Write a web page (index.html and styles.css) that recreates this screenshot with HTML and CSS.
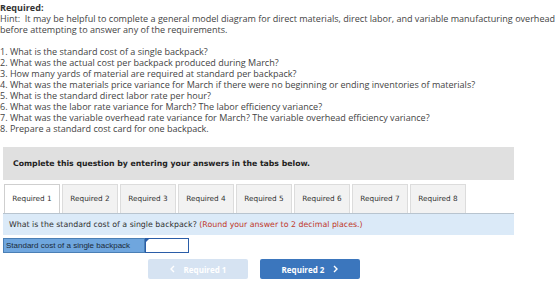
FILE: index.html
```html
<!DOCTYPE html>
<html lang="en">
<head>
    <meta charset="UTF-8">
    <title>Required</title>
    <link rel="stylesheet" href="styles.css">
</head>
<body>
    <div class="intro">
        <p class="title">Required:</p>
        <p>Hint:&nbsp; It may be helpful to complete a general model diagram for direct materials, direct labor, and variable manufacturing overhead before attempting to answer any of the requirements.</p>
        <ol class="reqs">
            <li>1. What is the standard cost of a single backpack?</li>
            <li>2. What was the actual cost per backpack produced during March?</li>
            <li>3. How many yards of material are required at standard per backpack?</li>
            <li>4. What was the materials price variance for March if there were no beginning or ending inventories of materials?</li>
            <li>5. What is the standard direct labor rate per hour?</li>
            <li>6. What was the labor rate variance for March? The labor efficiency variance?</li>
            <li>7. What was the variable overhead rate variance for March? The variable overhead efficiency variance?</li>
            <li>8. Prepare a standard cost card for one backpack.</li>
        </ol>
    </div>

    <div class="question">
        <div class="banner">Complete this question by entering your answers in the tabs below.</div>

        <div class="tabs">
            <div class="tab active">Required 1</div>
            <div class="tab">Required 2</div>
            <div class="tab">Required 3</div>
            <div class="tab">Required 4</div>
            <div class="tab">Required 5</div>
            <div class="tab">Required 6</div>
            <div class="tab">Required 7</div>
            <div class="tab">Required 8</div>
        </div>

        <div class="prompt">What is the standard cost of a single backpack? <span class="note">(Round your answer to 2 decimal places.)</span></div>

        <div class="answer">
            <div class="answer-label">Standard cost of a single backpack</div>
            <div class="answer-input"></div>
        </div>

        <div class="nav">
            <button class="nav-btn prev">
                <svg class="chev" width="5" height="8" viewBox="0 0 5 8"><path d="M4 1 L1 4 L4 7" fill="none" stroke="white" stroke-width="1.4"/></svg>
                Required 1
            </button>
            <button class="nav-btn next">
                Required 2
                <svg class="chev" width="5" height="8" viewBox="0 0 5 8"><path d="M1 1 L4 4 L1 7" fill="none" stroke="white" stroke-width="1.4"/></svg>
            </button>
        </div>
    </div>
</body>
</html>
```

FILE: styles.css
```css
body {
    margin: 0;
    padding: 2px 0 0 0;
    background-color: white;
    font-family: "Open Sans", "Lato", sans-serif;
    color: #444;
}

.intro {
    font-size: 9.05px;
    line-height: 11px;
}

.intro p {
    margin: 0;
}

.intro .title {
    font-weight: bold;
    color: #333;
}

.reqs {
    list-style: none;
    margin: 11px 0 0 0;
    padding: 0;
}

.question {
    margin-top: 13px;
    width: 511px;
    margin-left: 3px;
    font-family: "DejaVu Sans", Verdana, sans-serif;
}

.banner {
    background-color: #e0e0e0;
    height: 33px;
    line-height: 33px;
    padding-left: 10px;
    font-size: 7.75px;
    font-weight: bold;
    color: #222;
}

.tabs {
    display: flex;
    margin-top: 4px;
    padding-left: 1px;
    gap: 2px;
}

.tab {
    width: 54px;
    height: 28px;
    line-height: 28px;
    text-align: center;
    font-size: 7.3px;
    color: #333;
    background-color: #f2f2f2;
    border: 1px solid #dcdcdc;
    border-bottom: none;
}

.tab.active {
    background-color: white;
    border-color: #cfcfcf;
    position: relative;
    margin-bottom: -1px;
}

.prompt {
    background-color: #dbeaf8;
    border-top: 1px solid #b8c4cf;
    height: 21px;
    line-height: 21px;
    padding-left: 6px;
    font-size: 7.85px;
    color: #333;
}

.note {
    color: #c0392b;
}

.answer {
    display: flex;
    margin-top: 3px;
    height: 15px;
}

.answer-label {
    width: 138px;
    background-color: #6fa6de;
    border: 1px solid #4a7fb5;
    font-family: "Liberation Sans", Arial, sans-serif;
    font-size: 8px;
    line-height: 14px;
    padding-left: 2px;
    color: #1a2a3a;
}

.answer-input {
    width: 42px;
    border: 1px solid #2a5da8;
    background-color: white;
    position: relative;
}

.answer-input::before {
    content: "";
    position: absolute;
    left: 0;
    top: 0;
    border-top: 3px solid #2a5da8;
    border-right: 3px solid transparent;
}

.nav {
    display: flex;
    margin-top: 6px;
    margin-left: 145px;
    gap: 12px;
}

.nav-btn {
    display: flex;
    align-items: center;
    justify-content: center;
    gap: 9px;
    width: 100px;
    height: 20px;
    border: none;
    border-radius: 2px;
    color: white;
    font-family: "Open Sans", sans-serif;
    font-size: 8px;
    font-weight: bold;
    padding: 0;
}

.prev {
    background-color: #d6e3f2;
}

.next {
    background-color: #3b76bd;
}
```
